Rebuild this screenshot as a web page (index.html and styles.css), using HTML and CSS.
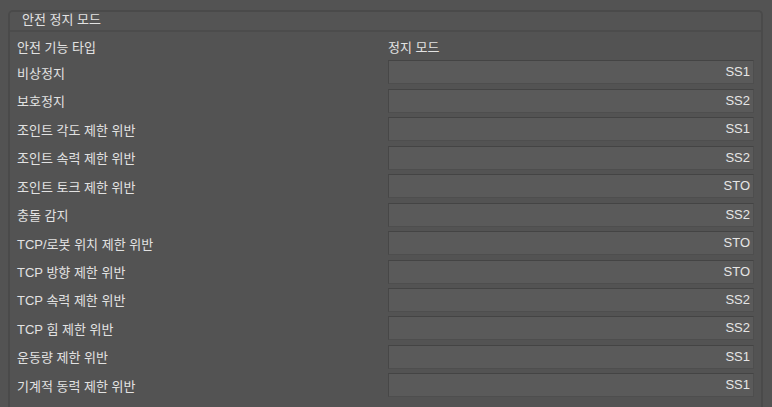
FILE: index.html
```html
<!DOCTYPE html>
<html lang="ko">
<head>
<meta charset="utf-8">
<link rel="stylesheet" href="styles.css">
</head>
<body>
<div class="group">
  <div class="group-title">안전 정지 모드</div>
  <div class="table">
    <div class="th">안전 기능 타입</div><div class="th th-mode">정지 모드</div>
    <div class="label">비상정지</div><div class="field">SS1</div>
    <div class="label">보호정지</div><div class="field">SS2</div>
    <div class="label">조인트 각도 제한 위반</div><div class="field">SS1</div>
    <div class="label">조인트 속력 제한 위반</div><div class="field">SS2</div>
    <div class="label">조인트 토크 제한 위반</div><div class="field">STO</div>
    <div class="label">충돌 감지</div><div class="field">SS2</div>
    <div class="label">TCP/로봇 위치 제한 위반</div><div class="field">STO</div>
    <div class="label">TCP 방향 제한 위반</div><div class="field">STO</div>
    <div class="label">TCP 속력 제한 위반</div><div class="field">SS2</div>
    <div class="label">TCP 힘 제한 위반</div><div class="field">SS2</div>
    <div class="label">운동량 제한 위반</div><div class="field">SS1</div>
    <div class="label">기계적 동력 제한 위반</div><div class="field">SS1</div>
  </div>
</div>
</body>
</html>
```

FILE: styles.css
```css
html, body {
  margin: 0;
  padding: 0;
  background: #535353;
  height: 100%;
  overflow: hidden;
}
body {
  font-family: "Liberation Sans", "Noto Sans CJK KR", sans-serif;
  font-size: 13px;
  color: #e2e2e2;
}
.group {
  margin: 10px 9px 0 8px;
  border: 2px solid #4a4a4a;
  border-bottom: none;
  border-radius: 5px 5px 0 0;
  height: calc(100% - 10px);
  box-sizing: border-box;
  overflow: hidden;
}
.group-title {
  height: 18px;
  line-height: 16px;
  padding-left: 12px;
  border-bottom: 2px solid #4c4c4c;
  background: #545454;
}
.table {
  display: grid;
  grid-template-columns: 371px 366px;
  grid-auto-rows: 28.45px;
  padding-left: 7px;
}
.th, .label {
  display: flex;
  align-items: center;
  height: 24px;
}
.th {
  height: 28px;
}
.field {
  height: 24px;
  box-sizing: border-box;
  background: #5a5a5a;
  border: 1px solid #4e4e4e;
  border-top-color: #444444;
  border-left-color: #474747;
  text-align: right;
  padding-right: 3px;
  line-height: 22px;
  color: #e6e6e6;
}
```
